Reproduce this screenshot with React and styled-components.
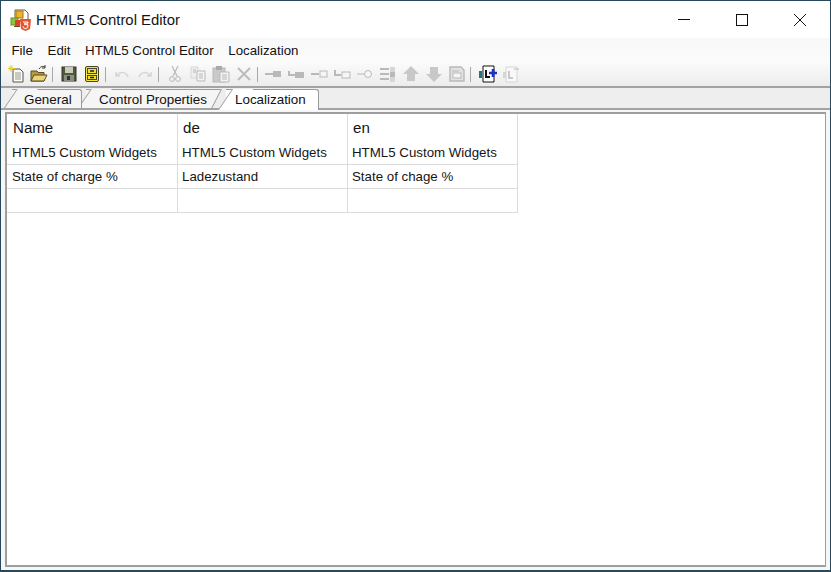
import React from "react";
import styled, { createGlobalStyle } from "styled-components";

const Global = createGlobalStyle`
  html, body { margin: 0; padding: 0; width: 831px; height: 572px; overflow: hidden; background: #fff; }
  #root { width: 831px; height: 572px; }
  * { box-sizing: border-box; }
`;

const STRIP = "#eeeeee";
const EDGE = "#9a9a9a";

const Win = styled.div`
  width: 831px; height: 572px;
  border: 1px solid #27495c;
  border-bottom-width: 2px;
  background: #f0f0f0;
  display: flex; flex-direction: column;
  font-family: "Liberation Sans", Arial, sans-serif;
  color: #111;
`;
const TitleBar = styled.div`
  height: 37px; flex: none; background: #fff;
  display: flex; align-items: center; padding: 0 1px 0 9px;
`;
const TitleText = styled.div`
  margin-left: 4px; margin-top: 1px; font-size: 14.9px; color: #151515; flex: 1;
`;
const WinButton = styled.div`
  width: 58px; height: 37px; display: flex; align-items: center; justify-content: center;
`;
const MenuBar = styled.div`
  height: 24px; flex: none; background: linear-gradient(#f8f8f8, #fbfbfb);
  display: flex; align-items: center; padding-left: 10.5px; gap: 14.6px;
  font-size: 13.3px; color: #111;
`;
const MenuItem = styled.span``;
const Toolbar = styled.div`
  height: 26px; flex: none; background: linear-gradient(#fbfbfb, #ececec);
  display: flex; align-items: center; padding-left: 3px;
  border-bottom: 2px solid #a3a3a3;
`;
const ToolButton = styled.div`
  width: 23px; height: 22px; flex: none; display: flex; align-items: center; justify-content: center;
`;
const Sep = styled.div`
  width: ${p => p.$w || 7}px; height: 15px; flex: none;
  &::after { content: ""; display: block; width: 1px; height: 15px; background: #a8a8a8; margin-left: 2px; }
`;
const TabStrip = styled.div`
  height: 22px; flex: none; display: flex; align-items: flex-end; padding-left: 3px;
  border-bottom: 2px solid #a3a3a3; background: ${STRIP};
`;
const Tab = styled.div`
  height: ${p => p.$active ? 21 : 19}px;
  width: ${p => p.$w}px;
  margin-left: ${p => p.$ml || 0}px;
  margin-bottom: ${p => p.$active ? -2 : 0}px;
  padding-left: ${p => p.$pl}px;
  padding-top: 2px;
  font-size: 13.4px; line-height: 16px;
  color: #111;
  position: relative;
  background: ${p => p.$active ? "#fff" : "#f5f5f5"};
  border-top: 1px solid ${EDGE};
  border-right: ${p => p.$slantRight ? "none" : `1px solid ${EDGE}`};
  border-top-right-radius: ${p => p.$slantRight ? 0 : 3}px;
  z-index: ${p => p.$z};
  &::before {
    content: ""; position: absolute; left: -8px; top: -1px; bottom: 0; width: 20px;
    background: inherit; border-left: 1px solid ${EDGE};
    transform: skewX(-34deg); transform-origin: bottom left; z-index: -1;
  }
  ${p => p.$slantRight ? `
    &::after {
      content: ""; position: absolute; left: 100%; top: -1px; bottom: 0; width: 12px;
      background: ${STRIP}; border-left: 1px solid ${EDGE};
      transform: skewX(-27deg); transform-origin: top left;
    }
  ` : ""}
`;
const TabLabel = styled.span`position: relative;`;
const Body = styled.div`
  flex: 1; padding: 2px 4px 3px 4px; background: #f6f6f6; display: flex; min-height: 0;
`;
const Panel = styled.div`
  flex: 1; background: #fff; border: 2px solid #9e9e9e; border-width: 2px 1px 2px 2px;
`;
const Table = styled.div`
  width: 511px; display: grid; grid-template-columns: 171px 170px 170px; grid-template-rows: 27px 24px 24px 24px;
`;
const Cell = styled.div`
  border-right: 1px solid #dcdcdc; border-bottom: 1px solid #dcdcdc;
  padding-left: ${p => (p.$header ? 5 : 4) + (p.$first ? 1 : 0)}px;
  font-size: ${p => p.$header ? 15.1 : 13.3}px;
  line-height: ${p => p.$header ? 28 : 23}px;
  color: #151515; white-space: nowrap; overflow: hidden;
  ${p => p.$header ? "border-bottom: none;" : ""}
`;

const Ico = ({ children, w = 18, h = 18 }) => (
  <svg width={w} height={h} viewBox="0 0 18 18" fill="none">{children}</svg>
);
const G = "#b9b9b9";
const L = "#d6d6d6";

const AppIcon = () => (
  <svg width="22" height="24" viewBox="0 0 22 24">
    <path d="M5 2h10l3 3v8H5z" fill="#fff" stroke="#6b5a3a" />
    <rect x="6" y="3" width="7" height="7" fill="#f0b429" stroke="#a8761a" />
    <rect x="1" y="10" width="7" height="7" fill="#8cc63f" stroke="#6a8f2a" />
    <rect x="5" y="12" width="5" height="6" fill="#d9442b" />
    <path d="M10 11h11l-1 10-4.5 2-4.5-2z" fill="#e8532b" />
    <path d="M13 14h5v1.2h-3.5v1.5H18l-.3 3-2.2 1-2.2-1-.1-1.4" fill="none" stroke="#fff" strokeWidth="1" />
    <path d="M4 18h6v1H4z" fill="#6b4a2a" />
  </svg>
);

const icons = {
  newDoc: <Ico>
    <path d="M6 4h7l3 3v10H6z" fill="#fbfbef" stroke="#555" />
    <path d="M8 8h6M8 10h6M8 12h6M8 14h6" stroke="#999" />
    <path d="M4 0v7M1 3.5h7M2 1.5l4 4M6 1.5l-4 4" stroke="#e0cc30" />
  </Ico>,
  open: <Ico>
    <path d="M1 6h6l1 1.5h6V16H1z" fill="#b49a40" stroke="#5a4d1e" />
    <path d="M1 16l3-6h13l-3 6z" fill="#ead37a" stroke="#5a4d1e" />
    <path d="M9 4c2-3 4-3 6-2M15 0v3h-3" stroke="#333" />
  </Ico>,
  save: <Ico>
    <rect x="2" y="2" width="14" height="14" fill="#4d5a3e" stroke="#333" />
    <rect x="5" y="2" width="8" height="6" fill="#c9cdb8" />
    <rect x="4" y="10" width="10" height="6" fill="#8b8f80" />
    <rect x="7" y="11" width="3" height="4" fill="#333" />
  </Ico>,
  cabinet: <Ico>
    <rect x="2.5" y="1.5" width="13" height="15" rx="1.5" fill="#f6e63a" stroke="#4a4418" />
    <rect x="4.5" y="3.5" width="9" height="5" fill="#f2e030" stroke="#444" />
    <rect x="4.5" y="10.5" width="9" height="4" fill="#f2e030" stroke="#444" />
    <path d="M7 6h4M7 12.5h4" stroke="#222" strokeWidth="1.4" />
  </Ico>,
  undo: <Ico>
    <path d="M3 7v4h4M4 11c2-4 7-5 10-1l1 2" stroke={L} strokeWidth="1.6" />
  </Ico>,
  redo: <Ico>
    <path d="M15 7v4h-4M14 11c-2-4-7-5-10-1l-1 2" stroke={L} strokeWidth="1.6" />
  </Ico>,
  cut: <Ico>
    <path d="M6 1l5 10M12 1l-5 10" stroke={G} strokeWidth="1.2" />
    <circle cx="6" cy="14" r="2.4" stroke={G} />
    <circle cx="12" cy="14" r="2.4" stroke={G} />
  </Ico>,
  copy: <Ico>
    <path d="M2 2h7v11H2z" fill="#eee" stroke={L} />
    <path d="M8 6h8v10H8z" fill="#f4f4f4" stroke={G} />
    <path d="M4 5h3M4 7h3M10 9h4M10 11h4M10 13h4" stroke={G} />
  </Ico>,
  paste: <Ico>
    <rect x="1" y="3" width="12" height="14" fill="#c9c9c9" stroke={G} />
    <rect x="4" y="1" width="6" height="4" fill="#aaa" />
    <path d="M8 7h9v10H8z" fill="#f2f2f2" stroke={G} />
    <path d="M10 10h5M10 12h5M10 14h5" stroke={G} />
  </Ico>,
  del: <Ico>
    <path d="M3 3l12 12M15 3L3 15" stroke="#bdbdbd" strokeWidth="2" />
  </Ico>,
  c1: <Ico><path d="M1 9h8" stroke={G} strokeWidth="2" /><rect x="9" y="6" width="8" height="6" fill={G} /></Ico>,
  c2: <Ico><path d="M2 6v4h6" stroke={G} strokeWidth="2" /><rect x="8" y="7" width="9" height="6" fill={G} /></Ico>,
  c3: <Ico><path d="M1 9h8" stroke={G} strokeWidth="2" /><rect x="10" y="6" width="7" height="6" fill="#f6f6f6" stroke={G} /></Ico>,
  c4: <Ico><path d="M2 5v5h6" stroke={G} strokeWidth="2" /><rect x="9" y="7" width="8" height="6" fill="#f6f6f6" stroke={G} /></Ico>,
  c5: <Ico><path d="M1 9h7" stroke={L} strokeWidth="2" /><circle cx="12" cy="9" r="3.5" fill="#f6f6f6" stroke={G} /></Ico>,
  c6: <Ico>
    <path d="M1 4h9M1 9h9M1 14h9" stroke={G} strokeWidth="2" />
    <rect x="11" y="2" width="5" height="5" fill={L} /><rect x="11" y="7" width="5" height="5" fill={G} /><rect x="11" y="12" width="5" height="5" fill={L} />
  </Ico>,
  up: <Ico><path d="M9 1l8 8h-4v7H5V9H1z" fill="#c8c8c8" /></Ico>,
  down: <Ico><path d="M9 17l8-8h-4V2H5v7H1z" fill="#c8c8c8" /></Ico>,
  page: <Ico>
    <path d="M2 2h11l3 3v11H2z" fill="#e2e2e2" stroke={G} strokeWidth="1.4" />
    <rect x="5" y="8" width="8" height="5" fill="#f6f6f6" stroke={G} />
    <path d="M4 6h7" stroke={G} />
  </Ico>,
  addLoc: <Ico>
    <path d="M4 1h11v16H4z" fill="#fff" stroke="#111" />
    <path d="M0 6h3v7H0z" fill="#167a7a" />
    <path d="M7 5v7h4" stroke="#111" strokeWidth="2" />
    <path d="M14 4v8M10 8h8" stroke="#1b2fd0" strokeWidth="2.6" />
  </Ico>,
  remLoc: <Ico>
    <path d="M4 2h11v15H4z" fill="#f8f8f8" stroke={L} />
    <path d="M1 7h3v6H1z" fill={L} />
    <path d="M7 6v7h4" stroke={G} strokeWidth="1.5" />
    <path d="M12 4h5" stroke={L} strokeWidth="2" />
  </Ico>,
};

const groups = [
  ["newDoc", "open"],
  ["save", "cabinet"],
  ["undo", "redo"],
  ["cut", "copy", "paste", "del"],
  ["c1", "c2", "c3", "c4", "c5", "c6", "up", "down", "page"],
  ["addLoc", "remLoc"],
];
const rows = [
  ["Name", "de", "en"],
  ["HTML5 Custom Widgets", "HTML5 Custom Widgets", "HTML5 Custom Widgets"],
  ["State of charge %", "Ladezustand", "State of chage %"],
  ["", "", ""],
];

export default function App() {
  return (
    <Win>
      <Global />
      <TitleBar>
        <AppIcon />
        <TitleText>HTML5 Control Editor</TitleText>
        <WinButton>
          <svg width="14" height="14" viewBox="0 0 14 14"><path d="M1 6.5h12" stroke="#111" /></svg>
        </WinButton>
        <WinButton>
          <svg width="14" height="14" viewBox="0 0 14 14"><rect x="1.5" y="1.5" width="11" height="11" fill="none" stroke="#111" /></svg>
        </WinButton>
        <WinButton>
          <svg width="14" height="14" viewBox="0 0 14 14"><path d="M1 1l12 12M13 1L1 13" stroke="#111" /></svg>
        </WinButton>
      </TitleBar>
      <MenuBar>
        {["File", "Edit", "HTML5 Control Editor", "Localization"].map(m => <MenuItem key={m}>{m}</MenuItem>)}
      </MenuBar>
      <Toolbar>
        {groups.map((g, i) => (
          <React.Fragment key={i}>
            {i > 0 && <Sep $w={i === 5 ? 8 : i === 4 ? 6 : 7} />}
            {g.map(n => <ToolButton key={n}>{icons[n]}</ToolButton>)}
          </React.Fragment>
        ))}
      </Toolbar>
      <TabStrip>
        <Tab $w={70} $ml={8} $pl={12} $z={3}><TabLabel>General</TabLabel></Tab>
        <Tab $w={135} $ml={4} $pl={13} $z={2} $slantRight><TabLabel>Control Properties</TabLabel></Tab>
        <Tab $w={93} $ml={5} $pl={9} $z={4} $active><TabLabel>Localization</TabLabel></Tab>
      </TabStrip>
      <Body>
        <Panel>
          <Table>
            {rows.flatMap((r, ri) => r.map((c, ci) => (
              <Cell key={ri + "-" + ci} $header={ri === 0} $first={ci === 0}>{c}</Cell>
            )))}
          </Table>
        </Panel>
      </Body>
    </Win>
  );
}
